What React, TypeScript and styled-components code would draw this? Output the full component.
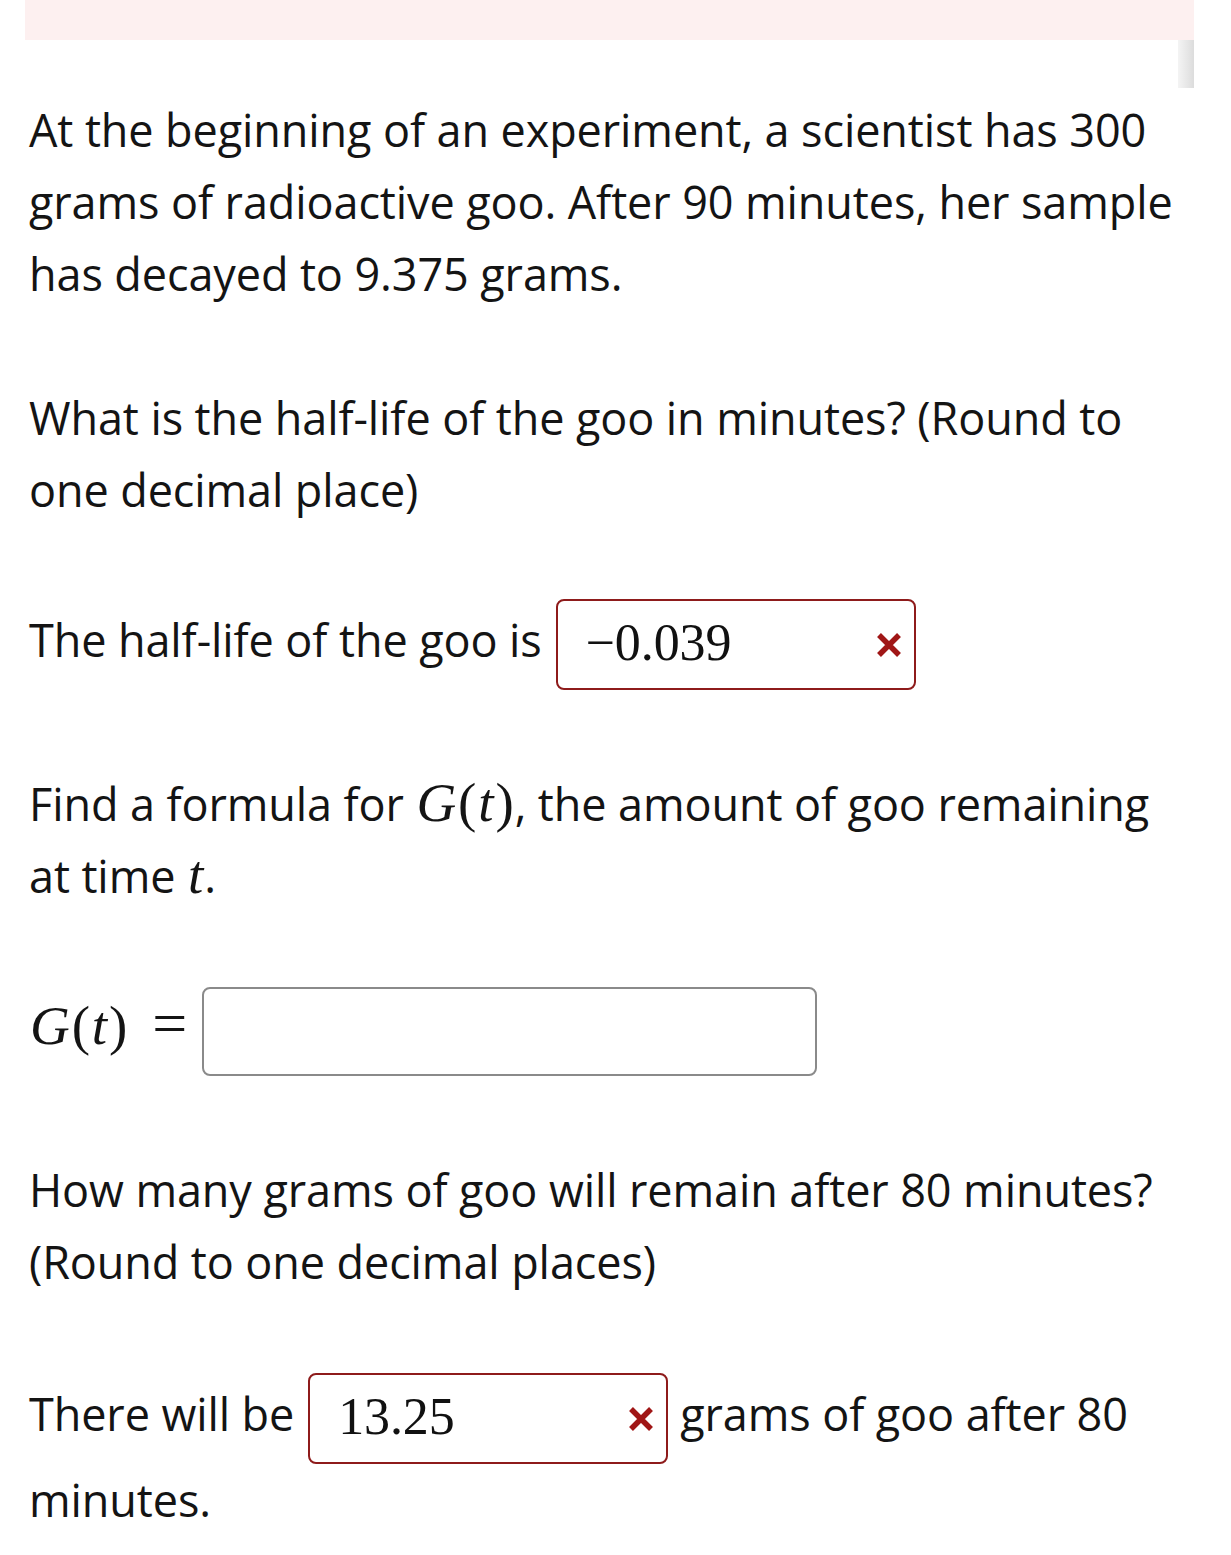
import React from "react";
import styled, { createGlobalStyle } from "styled-components";

const Global = createGlobalStyle`
  html, body { margin: 0; padding: 0; background: #ffffff; }
  body { font-family: "Open Sans", "Noto Sans", sans-serif; color: #141414; }
`;

const Page = styled.div`
  width: 1169px;
  margin-left: 25px;
  display: flex;
  flex-direction: column;
`;

const AlertBar = styled.div`
  height: 40px;
  background: #fdf0f0;
`;

const ScrollRow = styled.div`
  display: flex;
  justify-content: flex-end;
  height: 48px;
`;

const ScrollStub = styled.div`
  width: 16px;
  height: 48px;
  background: linear-gradient(90deg, #f4f4f4 0%, #e6e6e6 60%, #dcdcdc 100%);
`;

const Content = styled.div`
  padding-left: 4px;
  display: flex;
  flex-direction: column;
`;

const Para = styled.p<{ $top: number }>`
  margin: ${(p) => p.$top}px 0 0 0;
  font-size: 45px;
  line-height: 72px;
  letter-spacing: -0.1px;
`;

const MathGroup = styled.span`
  font-family: "Liberation Serif", "DejaVu Serif", serif;
  font-size: 55px;
  line-height: 1;
  white-space: nowrap;
`;

const MathVar = styled.span`
  font-style: italic;
  margin: 0 1px;
`;

const MathPunct = styled.span`
  margin: 0 1px;
`;

const MathEq = styled.span`
  font-family: "Liberation Serif", "DejaVu Serif", serif;
  font-size: 62px;
  line-height: 1;
  font-weight: 300;
  margin: 0 1px 0 24px;
`;

const AnswerBox = styled.span<{ $width: number; $state: "wrong" | "empty" }>`
  display: inline-flex;
  align-items: center;
  justify-content: space-between;
  box-sizing: border-box;
  vertical-align: middle;
  width: ${(p) => p.$width}px;
  height: ${(p) => (p.$state === "wrong" ? 91 : 89)}px;
  padding: 0 10px 0 28px;
  border: 2px solid ${(p) => (p.$state === "wrong" ? "#8e1b1b" : "#8a8a8a")};
  border-radius: 8px;
  background: #ffffff;
  margin: 0 12px 0 14px;
`;

const BoxValue = styled.span`
  font-family: "Liberation Serif", "DejaVu Serif", serif;
  font-size: 52px;
  line-height: 1;
  color: #111;
  padding-bottom: 4px;
`;

const WrongMark = styled.svg`
  width: 30px;
  height: 30px;
  flex: none;
`;

const Cross = () => (
  <WrongMark viewBox="0 0 30 30">
    <path d="M5 5 L25 25 M25 5 L5 25" stroke="#a01616" strokeWidth="5.5" strokeLinecap="butt" />
  </WrongMark>
);

const GofT = () => (
  <MathGroup>
    <MathVar>G</MathVar>
    <MathPunct>(</MathPunct>
    <MathVar>t</MathVar>
    <MathPunct>)</MathPunct>
  </MathGroup>
);

export default function App() {
  return (
    <>
      <Global />
      <Page>
        <AlertBar />
        <ScrollRow>
          <ScrollStub />
        </ScrollRow>
        <Content>
          <Para $top={6}>
            At the beginning of an experiment, a scientist has 300 grams of radioactive goo. After 90
            minutes, her sample has decayed to 9.375 grams.
          </Para>
          <Para $top={72}>What is the half-life of the goo in minutes? (Round to one decimal place)</Para>
          <Para $top={73}>
            The half-life of the goo is
            <AnswerBox $width={360} $state="wrong">
              <BoxValue>−0.039</BoxValue>
              <Cross />
            </AnswerBox>
          </Para>
          <Para $top={78}>
            Find a formula for <GofT />, the amount of goo remaining at time{" "}
            <MathGroup>
              <MathVar>t</MathVar>
            </MathGroup>
            .
          </Para>
          <Para $top={75}>
            <GofT />
            <MathEq>=</MathEq>
            <AnswerBox $width={615} $state="empty" />
          </Para>
          <Para $top={78}>How many grams of goo will remain after 80 minutes? (Round to one decimal places)</Para>
          <Para $top={75}>
            There will be
            <AnswerBox $width={360} $state="wrong">
              <BoxValue>13.25</BoxValue>
              <Cross />
            </AnswerBox>
            grams of goo after 80 minutes.
          </Para>
        </Content>
      </Page>
    </>
  );
}
